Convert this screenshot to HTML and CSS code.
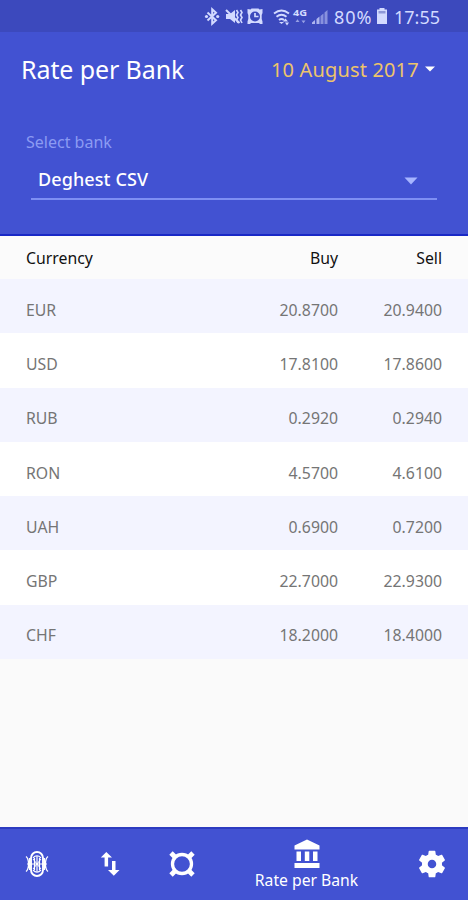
FILE: index.html
```html
<!DOCTYPE html>
<html lang="en">
<head>
<meta charset="utf-8">
<title>Rate per Bank</title>
<link rel="stylesheet" href="styles.css">
</head>
<body>
<div class="app">
  <div class="status">
    <svg class="status-icons" width="130" height="32" viewBox="0 0 130 32">
      <g fill="none" stroke="currentColor" stroke-width="2">
        <path d="M8.500 12.500l8.500 7.700-3.800 3.600V9.200l3.800 3.600-8.500 7.700"/>
        <path d="M27 10l13.500 13" stroke-width="2"/>
        <path d="M37.500 10l1.500 2.500-1.500 2.500 1.500 2.500-1.500 2.500 1.500 3M41.500 10l1.500 2.500-1.500 2.500 1.500 2.500-1.500 2.500 1.500 3" stroke-width="1.600"/>
        <path d="M75 13.500q7.500-6 15 0M77.500 16.800q5-4 10 0M80 20q2.500-2 5 0" stroke-width="1.900"/>
      </g>
      <g fill="currentColor">
        <circle cx="7.500" cy="16.500" r="1.600"/><circle cx="18.700" cy="16.500" r="1.600"/>
        <path d="M27 14h4l5-4v13l-5-4h-4z"/>
        <path d="M48.500 9l3 .5 1-1h7l1 1 3-.5v4l-.8 2v4l.8 2.500V24h-2.500l-1-1h-8l-1 1h-2.500v-2.500l.8-2.500v-4l-.8-2z"/>
        <path d="M80 22l2.500 2 2.500-2zM84 21.500h5l-2.500-3zM86 22.500h4l-2 3z"/>
        <path d="M96.500 22h4l-2-2.800zM102.500 20.500h4l-2 2.800z" opacity=".6"/>
        <path d="M113 24v-1.500l3-2.500v4zM117.500 24v-5l3-2.500V24z" opacity=".75"/>
        <path d="M121.500 24v-8l3-2.500V24zM125.500 24V12.500l3-2.500v14z" opacity=".5"/>
      </g>
      <circle cx="56" cy="16.500" r="5" fill="#3c49bd"/>
      <path d="M56 13v3.500h3.500" fill="none" stroke="currentColor" stroke-width="1.700"/>
      <text class="network" x="94" y="16.200" textLength="14" lengthAdjust="spacingAndGlyphs">4G</text>
    </svg>
    <span class="percent">80%</span>
    <svg class="battery" width="12" height="18" viewBox="0 0 12 18"><path d="M3.500 1h5v1.500H11V17H1V2.500h2.500z" fill="currentColor"/><path d="M2.500 4h7v2.500h-7z" fill="#8e98d8"/></svg>
    <span class="clock">17:55</span>
  </div>
  <header class="header">
    <div class="title-row">
      <h1 class="title">Rate per Bank</h1>
      <div class="date">10 August 2017</div>
      <svg class="date-arrow" width="10" height="6" viewBox="0 0 10 6"><path d="M0 .5h10L5 5.500z" fill="#fff"/></svg>
    </div>
    <div class="label">Select bank</div>
    <div class="select">
      <span class="bank">Deghest CSV</span>
      <svg class="select-arrow" width="14" height="8" viewBox="0 0 14 8"><path d="M.5.500h13L7 7.500z" fill="#a7b5ff"/></svg>
    </div>
  </header>
  <main class="rates">
    <div class="row head"><span>Currency</span><span>Buy</span><span>Sell</span></div>
    <div class="row"><span class="code">EUR</span><span>20.8700</span><span>20.9400</span></div>
    <div class="row"><span class="code">USD</span><span>17.8100</span><span>17.8600</span></div>
    <div class="row"><span class="code">RUB</span><span>0.2920</span><span>0.2940</span></div>
    <div class="row"><span class="code">RON</span><span>4.5700</span><span>4.6100</span></div>
    <div class="row"><span class="code">UAH</span><span>0.6900</span><span>0.7200</span></div>
    <div class="row"><span class="code">GBP</span><span>22.7000</span><span>22.9300</span></div>
    <div class="row"><span class="code">CHF</span><span>18.2000</span><span>18.4000</span></div>
  </main>
  <nav class="nav">
    <div class="tab"><svg width="24" height="28" viewBox="0 0 24 28" fill="none" stroke="#fff" stroke-width="1.200"><rect x="6" y="2" width="12" height="24" rx="6" stroke-width="1.900"/><path d="M8 8q4-4.500 8 0M8 20q4 4.500 8 0"/><path d="M1 6.500q2.500 2 2.500 7.500T1 21.500M23 6.500q-2.500 2-2.500 7.500t2.500 7.500M4.500 8v12M19.500 8v12M9.500 8v12M14.500 8v12M12 6v16"/><path d="M2 14h20M8 9l8 10M16 9L8 19" stroke-width="1"/></svg></div>
    <div class="tab"><svg width="20" height="26" viewBox="0 0 20 26" fill="#fff"><path d="M6.300 1L12 6.500H8.100V15.500H4.600V6.500H.8zM12 10h3.500v9h4l-5.700 5.700L8 19h4z"/></svg></div>
    <div class="tab"><svg width="28" height="28" viewBox="0 0 28 28" fill="none" stroke="#fff"><circle cx="14" cy="14" r="9.500" stroke-width="3.300"/><path d="M3 3l4.500 4.500M25 3l-4.500 4.500M3 25l4.500-4.500M25 25l-4.500-4.500" stroke-width="4.800"/></svg></div>
    <div class="tab active"><svg width="26" height="30" viewBox="0 0 26 30" fill="#fff"><path d="M13 .5L25.500 6.500v4H.5v-4zM2.500 12.500H7v9.500H2.500zM10.800 12.500h4.500v9.500h-4.500zM19 12.500h4.500v9.500H19zM.5 24h25v5H.5z"/></svg><span class="tab-label">Rate per Bank</span></div>
    <div class="tab"><svg width="32" height="32" viewBox="0 0 24 24" fill="#fff"><path d="M19.430 12.980c.04-.32.07-.64.07-.98s-.03-.66-.07-.98l2.110-1.650c.19-.15.24-.42.12-.64l-2-3.460c-.12-.22-.39-.3-.61-.22l-2.490 1c-.52-.4-1.080-.73-1.690-.98l-.38-2.650C14.460 2.180 14.250 2 14 2h-4c-.25 0-.46.18-.49.42l-.38 2.650c-.61.25-1.170.59-1.690.98l-2.490-1c-.23-.09-.49 0-.61.22l-2 3.460c-.13.22-.07.49.12.64l2.110 1.650c-.04.32-.07.65-.07.98s.03.66.07.98l-2.110 1.650c-.19.15-.24.42-.12.64l2 3.460c.12.22.39.3.61.22l2.490-1c.52.4 1.080.73 1.690.98l.38 2.650c.03.24.24.42.49.42h4c.25 0 .46-.18.49-.42l.38-2.650c.61-.25 1.170-.59 1.690-.98l2.490 1c.23.09.49 0 .61-.22l2-3.460c.12-.22.07-.49-.12-.64zM12 15.200a3.200 3.200 0 1 1 0-6.400 3.200 3.200 0 0 1 0 6.400z"/></svg></div>
  </nav>
</div>
</body>
</html>
```
FILE: styles.css
```css
* { box-sizing: border-box; }
body {
  margin: 0;
  font-family: "Noto Sans", sans-serif;
  background: #fafafa;
}
.app {
  width: 468px;
  height: 900px;
  display: flex;
  flex-direction: column;
  overflow: hidden;
}
.status {
  height: 32px;
  flex: none;
  display: flex;
  align-items: center;
  padding-left: 199px;
  background: #3c49bd;
  color: #d3daff;
  white-space: nowrap;
}
.status-icons, .battery { flex: none; }
.network { font-size: 9px; font-weight: 700; fill: currentColor; }
.percent { width: 42px; margin-left: 5px; font-size: 18px; letter-spacing: 1px; line-height: 32px; padding-top: 2px; }
.clock { margin-left: 6px; font-size: 18px; line-height: 32px; padding-top: 2px; }
.header {
  height: 204px;
  flex: none;
  background: #4252d2;
  border-bottom: 2px solid #1929c6;
}
.title-row {
  height: 74px;
  display: flex;
  align-items: center;
  padding-left: 21px;
}
.title { margin: 0; width: 250px; font-size: 25px; font-weight: 400; letter-spacing: -0.1px; color: #fff; }
.date { width: 149px; font-size: 20px; letter-spacing: 0.150px; color: #edc46b; white-space: nowrap; }
.date-arrow { margin-left: 5px; }
.label {
  margin: 24px 0 0 26px;
  font-size: 16px;
  line-height: 24px;
  color: #8c9bf2;
}
.select {
  display: flex;
  align-items: center;
  justify-content: space-between;
  height: 46px;
  margin: 0 31px;
  padding: 5px 19px 0 7px;
  border-bottom: 2px solid #7e8ff3;
}
.bank { font-size: 18px; font-weight: 500; letter-spacing: 0.1px; color: #fff; }
.select-arrow { margin-top: 5px; }
.rates { flex: 1; }
.row {
  display: grid;
  grid-template-columns: 212px 100px 104px;
  height: 54.300px;
  align-items: center;
  padding: 7px 26px 0;
  font-size: 15.800px;
  color: #757575;
  background: #fff;
}
.row:nth-child(even) { background: #f3f4ff; }
.row span + span { text-align: right; }
.head { height: 43px; padding-top: 1px; color: #111; background: #fbfbfb; }
.nav {
  height: 73px;
  flex: none;
  display: grid;
  grid-template-columns: 73px 73px 72px 177px 73px;
  background: #4252d2;
  border-top: 2px solid #2c3bc0;
}
.tab { display: flex; align-items: center; justify-content: center; padding-bottom: 1px; }
.active { flex-direction: column; justify-content: flex-start; padding-top: 10px; }
.tab-label { font-size: 15.700px; line-height: 22px; color: #fff; }
```
